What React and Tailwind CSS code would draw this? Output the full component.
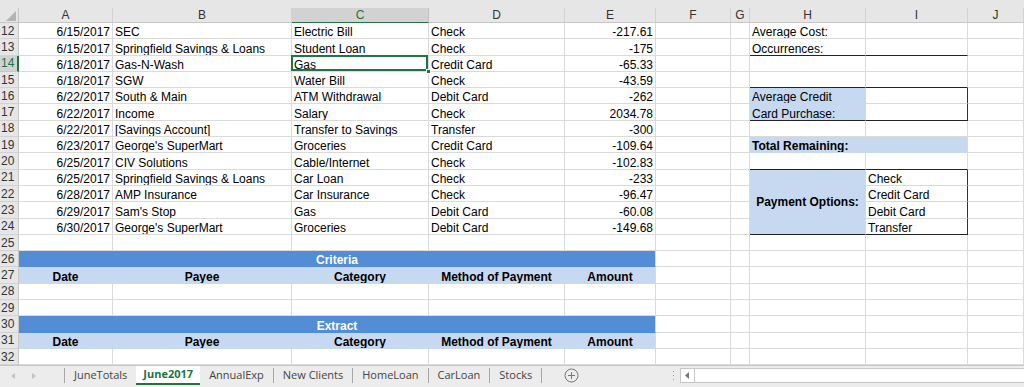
import React from "react";

const COLS = ["A", "B", "C", "D", "E", "F", "G", "H", "I", "J"];

const data = [
  ["6/15/2017", "SEC", "Electric Bill", "Check", "-217.61"],
  ["6/15/2017", "Springfield Savings & Loans", "Student Loan", "Check", "-175"],
  ["6/18/2017", "Gas-N-Wash", "Gas", "Credit Card", "-65.33"],
  ["6/18/2017", "SGW", "Water Bill", "Check", "-43.59"],
  ["6/22/2017", "South & Main", "ATM Withdrawal", "Debit Card", "-262"],
  ["6/22/2017", "Income", "Salary", "Check", "2034.78"],
  ["6/22/2017", "[Savings Account]", "Transfer to Savings", "Transfer", "-300"],
  ["6/23/2017", "George's SuperMart", "Groceries", "Credit Card", "-109.64"],
  ["6/25/2017", "CIV Solutions", "Cable/Internet", "Check", "-102.83"],
  ["6/25/2017", "Springfield Savings & Loans", "Car Loan", "Check", "-233"],
  ["6/28/2017", "AMP Insurance", "Car Insurance", "Check", "-96.47"],
  ["6/29/2017", "Sam's Stop", "Gas", "Debit Card", "-60.08"],
  ["6/30/2017", "George's SuperMart", "Groceries", "Debit Card", "-149.68"],
];

const heads = ["Date", "Payee", "Category", "Method of Payment", "Amount"];

const bgCls = {
  none: "bg-white text-black",
  light: "bg-[#c6d9f1] text-black",
  dark: "bg-[#538dd5] text-white",
};
const rCls = {
  grid: "border-r-[#dadada]",
  dark: "border-r-[#333333]",
  light: "border-r-[#c6d9f1]",
  band: "border-r-[#538dd5]",
};
const bCls = {
  grid: "border-b-[#dadada]",
  dark: "border-b-[#222222]",
  light: "border-b-[#c6d9f1]",
  band: "border-b-[#538dd5]",
};
const alignCls = {
  left: "justify-start",
  right: "justify-end",
  center: "justify-center",
};

const cell = (text = "", o = {}) => ({
  text,
  bg: "none",
  r: "grid",
  b: "grid",
  align: "left",
  ...o,
});

// right hand panel, columns H and I, keyed by row number
const panel = {
  12: [cell("Average Cost:"), cell()],
  13: [cell("Occurrences:", { b: "dark" }), cell("", { b: "dark" })],
  15: [cell("", { b: "dark" }), cell("", { b: "dark" })],
  16: [cell("Average Credit", { bg: "light", r: "light", b: "light" }), cell("", { r: "dark" })],
  17: [cell("Card Purchase:", { bg: "light", r: "light", b: "dark" }), cell("", { r: "dark", b: "dark" })],
  19: [cell("Total Remaining:", { bg: "light", r: "grid", b: "light", bold: true, span: 2 })],
  20: [cell("", { b: "dark" }), cell("", { b: "dark" })],
  21: [
    cell("Payment Options:", { bg: "light", r: "light", b: "dark", bold: true, rows: 4, mid: true, align: "center" }),
    cell("Check", { r: "dark" }),
  ],
  22: [cell("Credit Card", { r: "dark" })],
  23: [cell("Debit Card", { r: "dark" })],
  24: [cell("Transfer", { r: "dark", b: "dark" })],
};

function buildRow(n) {
  let left;
  if (n >= 12 && n <= 24) {
    const d = data[n - 12];
    left = [
      cell(d[0], { align: "right" }),
      cell(d[1]),
      cell(d[2], { sel: n === 14 }),
      cell(d[3]),
      cell(d[4], { align: "right" }),
    ];
  } else if (n === 26 || n === 30) {
    left = [
      cell(n === 26 ? "Criteria" : "Extract", {
        span: 5,
        bg: "dark",
        r: "grid",
        b: "band",
        bold: true,
        align: "center",
      }),
    ];
  } else if (n === 27 || n === 31) {
    left = heads.map((h, i) =>
      cell(h, { bg: "light", r: i === 4 ? "grid" : "light", b: "light", bold: true, align: "center" })
    );
  } else {
    left = [cell(), cell(), cell(), cell(), cell()];
  }
  const right = panel[n] || (n === 22 || n === 23 || n === 24 ? [] : [cell(), cell()]);
  return [...left, cell(), cell(), ...right, cell()];
}

function Cell({ c }) {
  const cls = [
    "relative flex overflow-hidden whitespace-nowrap px-[2px] border-r border-b text-[12px] leading-[12px]",
    c.mid ? "items-center" : "items-end",
    alignCls[c.align],
    bgCls[c.bg],
    rCls[c.r],
    bCls[c.b],
    c.bold ? "font-bold" : "",
    c.span === 2 ? "col-span-2" : "",
    c.span === 5 ? "col-span-5" : "",
    c.rows === 4 ? "row-span-4" : "",
    c.sel ? "overflow-visible z-10" : "",
  ].join(" ");
  return (
    <div className={cls}>
      <span>{c.text}</span>
      {c.sel && (
        <>
          <div className="absolute -left-[1px] -top-[1px] -right-[0px] -bottom-[0px] border-2 border-[#217346]" />
          <div className="absolute -right-[3px] -bottom-[3px] w-[5px] h-[5px] bg-[#217346] border border-white" />
        </>
      )}
    </div>
  );
}

function Sheet() {
  const rows = [];
  for (let n = 12; n <= 32; n++) rows.push(n);
  return (
    <div className="grid shrink-0 grid-cols-[19px_94px_179px_137px_136px_91px_75px_19px_116px_102px_1fr] grid-rows-[15px_repeat(21,16.3px)]">
      {/* corner */}
      <div className="relative bg-[#e6e6e6] border-r border-b border-[#c6c6c6]">
        <svg className="absolute left-0 top-0" width="19" height="15" viewBox="0 0 19 15">
          <polygon points="6,13 16,13 16,3" fill="#b4b4b4" />
        </svg>
      </div>
      {COLS.map((l) => (
        <div
          key={l}
          className={
            l === "C"
              ? "flex items-center justify-center bg-[#d2d2d2] text-[#217346] text-[12px] border-r border-r-[#c0c0c0] border-b border-b-[#217346]"
              : "flex items-center justify-center bg-[#e6e6e6] text-[#333] text-[12px] border-r border-r-[#d2d2d2] border-b border-b-[#c6c6c6]"
          }
        >
          {l}
        </div>
      ))}
      {rows.map((n) => (
        <React.Fragment key={n}>
          <div
            className={
              n === 14
                ? "flex items-center pl-[1px] bg-[#d2d2d2] text-[#217346] text-[12px] leading-[12px] border-r-2 border-r-[#217346] border-b border-b-[#c6c6c6]"
                : "flex items-center pl-[1px] bg-[#e6e6e6] text-[#333] text-[12px] leading-[12px] border-r border-r-[#c6c6c6] border-b border-b-[#d2d2d2]"
            }
          >
            {n}
          </div>
          {buildRow(n).map((c, i) => (
            <Cell key={i} c={c} />
          ))}
        </React.Fragment>
      ))}
    </div>
  );
}

const tabs = ["JuneTotals", "June2017", "AnnualExp", "New Clients", "HomeLoan", "CarLoan", "Stocks"];

function Sep() {
  return <div className="w-px h-[15px] mt-[2px] bg-[#a6a6a6]" />;
}

function TabBar() {
  return (
    <div className="flex-1 flex items-start bg-[#ececec] border-t border-[#c6c6c6] font-['Open_Sans',sans-serif] text-[11px] text-[#444]">
      <div className="w-[64px] h-[19px] flex items-center">
        <svg width="64" height="19" viewBox="0 0 64 19">
          <polygon points="15,7 11,10 15,13" fill="#c3c3c3" />
          <polygon points="32,7 36,10 32,13" fill="#c3c3c3" />
        </svg>
      </div>
      <Sep />
      {tabs.map((t, i) => {
        const active = t === "June2017";
        return (
          <React.Fragment key={t}>
            {active ? (
              <div className="h-[19px] flex items-center px-[7px] bg-white text-[#217346] font-bold border-b-2 border-[#217346]">
                {t}
              </div>
            ) : (
              <div className="h-[19px] flex items-center px-[9px]">{t}</div>
            )}
            {i > 1 && <Sep />}
          </React.Fragment>
        );
      })}
      <div className="ml-[22px] h-[19px] flex items-center">
        <svg width="15" height="15" viewBox="0 0 15 15">
          <circle cx="7.5" cy="7.5" r="6.5" fill="none" stroke="#777" strokeWidth="1" />
          <path d="M7.5 4v7M4 7.5h7" stroke="#777" strokeWidth="1" />
        </svg>
      </div>
      <div className="flex-1" />
      <div className="w-[14px] h-[19px] flex items-center justify-center">
        <svg width="3" height="12" viewBox="0 0 3 12">
          <rect x="1" y="1" width="1" height="1" fill="#999" />
          <rect x="1" y="5" width="1" height="1" fill="#999" />
          <rect x="1" y="9" width="1" height="1" fill="#999" />
        </svg>
      </div>
      <div className="w-[344px] h-[15px] mt-[2px] flex bg-white border-l border-y border-[#c6c6c6]">
        <div className="w-[14px] flex items-center justify-center border-r border-[#c6c6c6]">
          <svg width="5" height="7" viewBox="0 0 5 7">
            <polygon points="4,0 0,3.5 4,7" fill="#777" />
          </svg>
        </div>
      </div>
    </div>
  );
}

export default function App() {
  return (
    <div className="w-[1024px] h-[387px] overflow-hidden bg-white flex flex-col font-['Liberation_Sans',Arial,sans-serif]">
      <div className="h-[8px] shrink-0 bg-[#e6e6e6]" />
      <Sheet />
      <TabBar />
    </div>
  );
}
